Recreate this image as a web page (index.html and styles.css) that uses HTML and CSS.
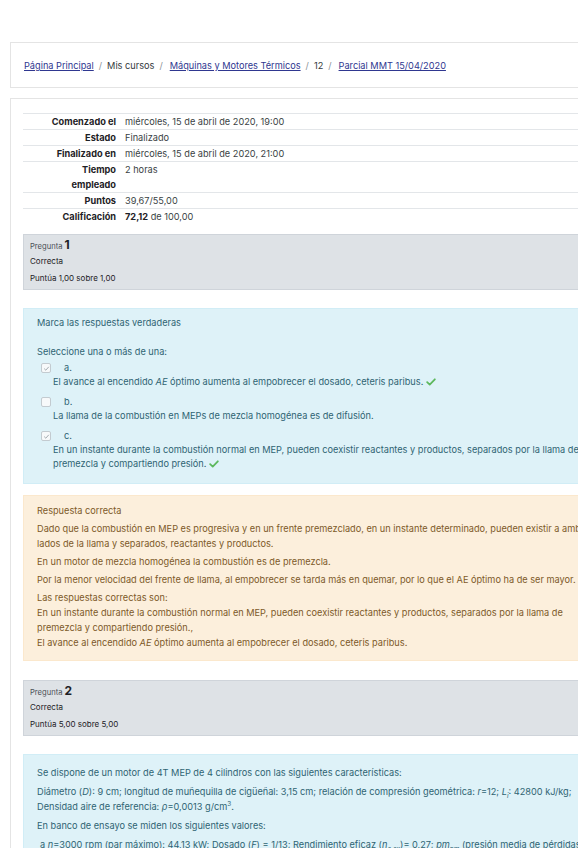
FILE: index.html
```html
<!DOCTYPE html>
<html lang="es">
<head>
<meta charset="utf-8">
<title>Parcial MMT 15/04/2020</title>
<link rel="stylesheet" href="styles.css">
</head>
<body>
<div class="page">
  <div class="card crumbs">
    <nav class="breadcrumb">
      <a href="#">Página Principal</a><span class="sep">/</span><span class="plain">Mis cursos</span><span class="sep">/</span><a href="#">Máquinas y Motores Térmicos</a><span class="sep">/</span><span class="plain">12</span><span class="sep">/</span><a href="#">Parcial MMT 15/04/2020</a>
    </nav>
  </div>

  <div class="card main">
    <table class="summary">
      <colgroup><col class="c-label"><col></colgroup>
      <tr><th>Comenzado el</th><td>miércoles, 15 de abril de 2020, 19:00</td></tr>
      <tr><th>Estado</th><td>Finalizado</td></tr>
      <tr><th>Finalizado en</th><td>miércoles, 15 de abril de 2020, 21:00</td></tr>
      <tr><th>Tiempo empleado</th><td>2 horas</td></tr>
      <tr><th>Puntos</th><td>39,67/55,00</td></tr>
      <tr><th>Calificación</th><td><b>72,12</b> de 100,00</td></tr>
    </table>

    <div class="que">
      <div class="info">
        <h3 class="no"><span class="qlabel">Pregunta</span><span class="qno">1</span></h3>
        <div class="state">Correcta</div>
        <div class="grade">Puntúa 1,00 sobre 1,00</div>
      </div>
      <div class="formulation">
        <p class="qtext">Marca las respuestas verdaderas</p>
        <p class="prompt">Seleccione una o más de una:</p>
        <div class="answers">
          <div class="opt">
            <div class="opt-head"><span class="cb checked"><svg viewBox="0 0 9 9" width="9" height="9"><path d="M2.2 4.6 L3.8 6.2 L6.8 2.8" fill="none" stroke="#9aa3a8" stroke-width="0.9"/></svg></span><span class="num">a.</span></div>
            <div class="opt-text">El avance al encendido <i>AE</i> óptimo aumenta al empobrecer el dosado, ceteris paribus. <svg class="ok" viewBox="0 0 12 10" width="10" height="8"><path d="M1.2 5.2 L4.4 8.2 L10.8 1.6" fill="none" stroke="#5cb85c" stroke-width="2.2" stroke-linecap="round" stroke-linejoin="round"/></svg></div>
          </div>
          <div class="opt">
            <div class="opt-head"><span class="cb"></span><span class="num">b.</span></div>
            <div class="opt-text">La llama de la combustión en MEPs de mezcla homogénea es de difusión.</div>
          </div>
          <div class="opt">
            <div class="opt-head"><span class="cb checked"><svg viewBox="0 0 9 9" width="9" height="9"><path d="M2.2 4.6 L3.8 6.2 L6.8 2.8" fill="none" stroke="#9aa3a8" stroke-width="0.9"/></svg></span><span class="num">c.</span></div>
            <div class="opt-text">En un instante durante la combustión normal en MEP, pueden coexistir reactantes y productos, separados por la llama de premezcla y compartiendo presión. <svg class="ok" viewBox="0 0 12 10" width="10" height="8"><path d="M1.2 5.2 L4.4 8.2 L10.8 1.6" fill="none" stroke="#5cb85c" stroke-width="2.2" stroke-linecap="round" stroke-linejoin="round"/></svg></div>
          </div>
        </div>
      </div>
      <div class="outcome">
        <p>Respuesta correcta</p>
        <p>Dado que la combustión en MEP es progresiva y en un frente premezclado, en un instante determinado, pueden existir a ambos lados de la llama y separados, reactantes y productos.</p>
        <p>En un motor de mezcla homogénea la combustión es de premezcla.</p>
        <p>Por la menor velocidad del frente de llama, al empobrecer se tarda más en quemar, por lo que el AE óptimo ha de ser mayor.</p>
        <p>Las respuestas correctas son:<br>En un instante durante la combustión normal en MEP, pueden coexistir reactantes y productos, separados por la llama de premezcla y compartiendo presión.,<br>El avance al encendido <i>AE</i> óptimo aumenta al empobrecer el dosado, ceteris paribus.</p>
      </div>
    </div>

    <div class="que">
      <div class="info">
        <h3 class="no"><span class="qlabel">Pregunta</span><span class="qno">2</span></h3>
        <div class="state">Correcta</div>
        <div class="grade">Puntúa 5,00 sobre 5,00</div>
      </div>
      <div class="formulation f2">
        <p>Se dispone de un motor de 4T MEP de 4 cilindros con las siguientes características:</p>
        <p>Diámetro (<i>D</i>): 9 cm; longitud de muñequilla de cigüeñal: 3,15 cm; relación de compresión geométrica: <i>r</i>=12; <i>L<sub>i</sub></i>: 42800 kJ/kg; Densidad aire de referencia: <i>ρ</i>=0,0013 g/cm<sup>3</sup>.</p>
        <p>En banco de ensayo se miden los siguientes valores:</p>
        <p class="indent">a <i>n</i>=3000 rpm (par máximo): 44,13 kW; Dosado (<i>F</i>) = 1/13; Rendimiento eficaz (<i>η<sub>e,ex</sub></i>)= 0,27; <i>pm<sub>pm</sub></i> (presión media de pérdidas mecánicas) = 1,2 bar.</p>
        <p>Calcule:</p>
      </div>
    </div>
  </div>
</div>
</body>
</html>
```

FILE: styles.css
```css
html {
  overflow: hidden;
}

body {
  margin: 0;
  background: #ffffff;
  font-family: Inter, "Liberation Sans", sans-serif;
  font-size: 9.2px;
  line-height: 15px;
  color: #1d2125;
}

.page {
  width: 624px;
  margin: 42px 0 0 10px;
}

.card {
  border: 1px solid #e4e4e4;
  background: #ffffff;
}

.crumbs {
  padding: 15px 13px 14px;
}

.breadcrumb {
  white-space: nowrap;
}

.breadcrumb a {
  color: #2f3790;
  text-decoration: underline;
  margin-left: 2px;
}

.breadcrumb a:first-child {
  margin-left: 0;
}

.breadcrumb .plain {
  color: #343a40;
}

.breadcrumb .sep {
  color: #8a9096;
  padding: 0 5px;
}

.main {
  margin-top: 10px;
  padding: 14px 12px 0;
}

.summary {
  width: 100%;
  border-collapse: collapse;
  table-layout: fixed;
}

.c-label {
  width: 97px;
}

.summary th,
.summary td {
  border-top: 1px solid #e3e6e9;
  padding: 0;
  line-height: 15px;
  vertical-align: top;
}

.summary th {
  padding-left: 24px;
  padding-right: 4px;
  text-align: right;
  font-weight: 700;
  color: #1d2125;
  white-space: normal;
}

.summary td {
  padding-left: 5px;
  color: #3a3f44;
}

.summary td b {
  color: #1d2125;
}

.que {
  margin-top: 10px;
}

.que + .que {
  margin-top: 19px;
}

.info {
  background: #dee2e6;
  border: 1px solid #cfd4da;
  padding: 3px 6px 5px;
  color: #1d2125;
}

.no {
  margin: 0;
  display: flex;
  align-items: baseline;
  height: 14px;
  font-weight: 400;
  font-size: 7.6px;
  line-height: 14px;
}

.qlabel {
  color: #4a5056;
}

.qno {
  font-size: 12px;
  font-weight: 700;
  margin-left: 2px;
}

.state,
.grade {
  font-size: 8px;
  line-height: 12px;
}

.state {
  margin-top: 3px;
}

.grade {
  margin-top: 5px;
}

.formulation {
  margin-top: 18px;
  background: #def2f8;
  border: 1px solid #d1edf6;
  color: #2f6473;
  padding: 6px 13px 12px;
}

.formulation p {
  margin: 0;
}

.qtext {
  margin-bottom: 14px !important;
}

.answers {
  margin-top: 2px;
  line-height: 14px;
}

.opt + .opt {
  margin-top: 6px;
}

.opt-head {
  display: flex;
  align-items: center;
  height: 14px;
}

.cb {
  width: 8px;
  height: 8px;
  margin-left: 4px;
  border: 1px solid #c3cbd0;
  border-radius: 2px;
  background: #f7f9fa;
  display: flex;
  align-items: center;
  justify-content: center;
  overflow: hidden;
}

.cb svg {
  display: block;
  flex: none;
}

.num {
  margin-left: 13px;
}

.opt-text {
  margin-left: 16px;
}

.ok {
  vertical-align: -0.5px;
}

.outcome {
  margin-top: 11px;
  background: #fcefdc;
  border: 1px solid #fbe8cd;
  color: #7d5a29;
  padding: 7px 13px 10px;
}

.outcome p {
  margin: 0;
}

.outcome p + p {
  margin-top: 3px;
}

.f2 {
  padding-top: 10px;
}

.f2 p + p {
  margin-top: 4px;
}

.f2 .indent {
  padding-left: 3px;
}

sub,
sup {
  line-height: 0;
  font-size: 70%;
}
```
